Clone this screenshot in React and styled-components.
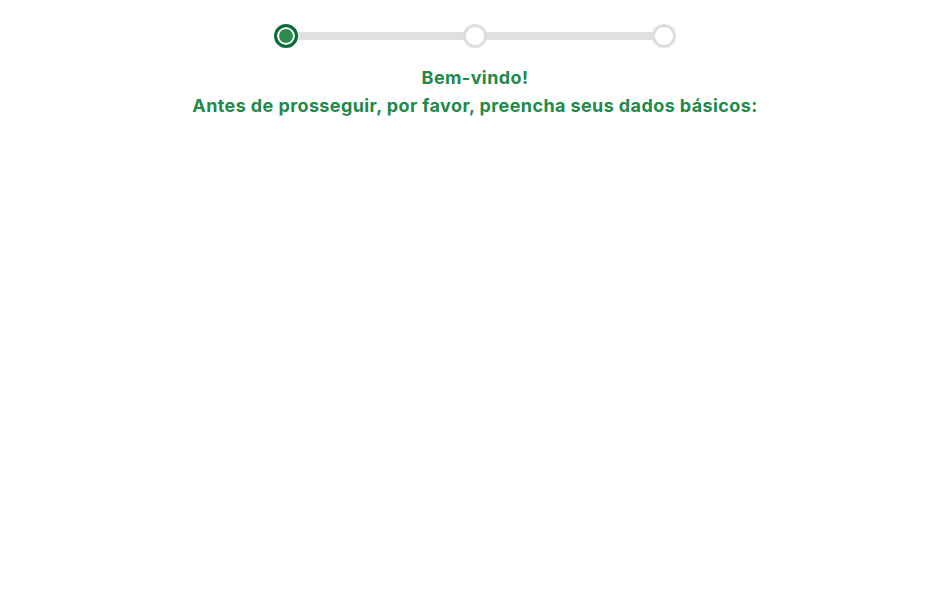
import React from "react";
import styled, { createGlobalStyle } from "styled-components";

const Global = createGlobalStyle`
  html, body { margin: 0; padding: 0; background: #fff; }
  body { font-family: "Inter", "Noto Sans", sans-serif; }
`;

const Page = styled.div`
  width: 950px;
  height: 600px;
  display: flex;
  flex-direction: column;
  align-items: center;
  padding-top: 24px;
  box-sizing: border-box;
`;

const Stepper = styled.div`
  width: 402px;
  display: flex;
  align-items: center;
`;

const Step = styled.div`
  width: 24px;
  height: 24px;
  box-sizing: border-box;
  border-radius: 50%;
  flex: none;
  border: 3px solid ${(p) => (p.$active ? "#0b6b39" : "#dedede")};
  background: ${(p) => (p.$active ? "#2a8b4d" : "#fff")};
  box-shadow: ${(p) => (p.$active ? "inset 0 0 0 2px #fff" : "none")};
  position: relative;
  z-index: 1;
`;

const Track = styled.div`
  flex: 1;
  height: 8px;
  background: #e0e0e0;
  margin: 0 -2px;
`;

const Heading = styled.div`
  margin-top: 16px;
  text-align: center;
  color: #22894a;
  font-weight: 700;
  font-size: 18px;
  line-height: 28px;
  letter-spacing: 0.4px;
`;

export default function App() {
  return (
    <>
      <Global />
      <Page>
        <Stepper>
          <Step $active />
          <Track />
          <Step />
          <Track />
          <Step />
        </Stepper>
        <Heading>
          Bem-vindo!
          <br />
          Antes de prosseguir, por favor, preencha seus dados básicos:
        </Heading>
      </Page>
    </>
  );
}
